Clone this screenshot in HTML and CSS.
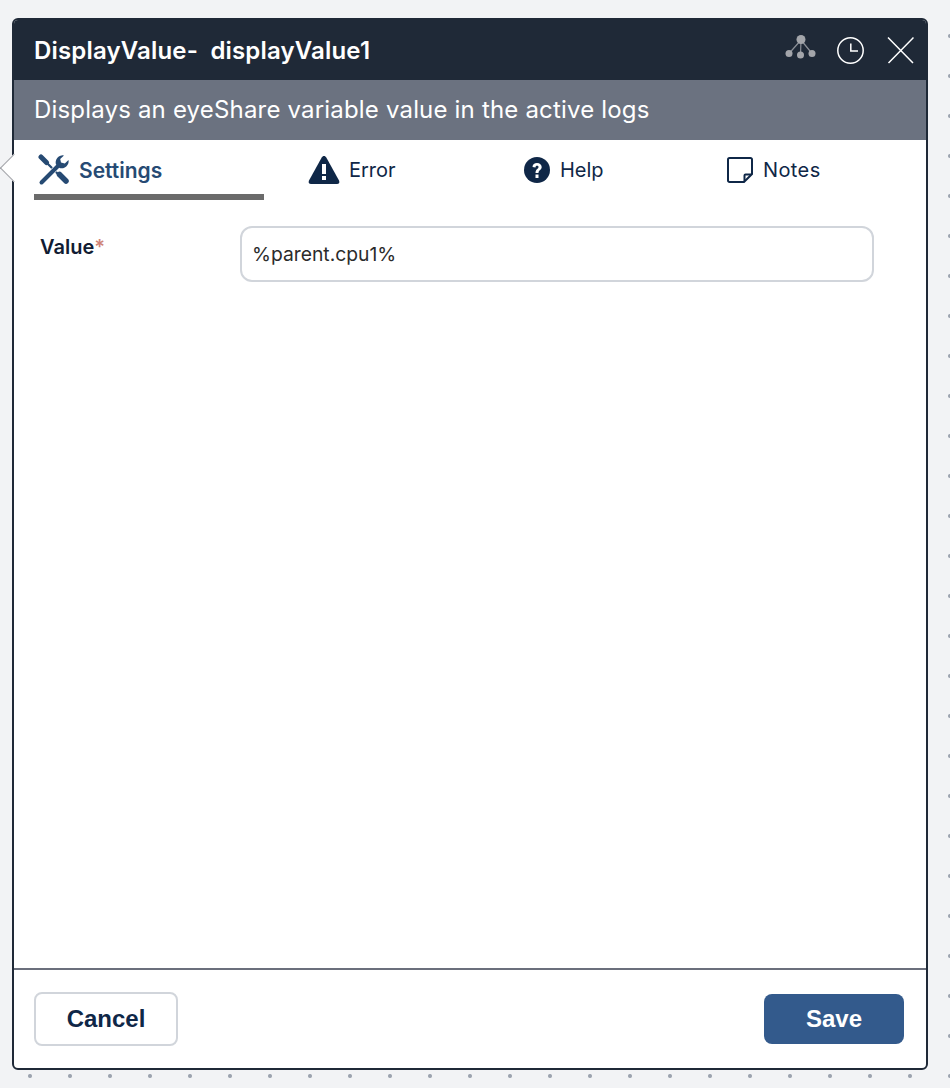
FILE: index.html
```html
<!DOCTYPE html>
<html lang="en">
<head>
    <meta charset="UTF-8">
    <title>DisplayValue</title>
    <link rel="stylesheet" href="styles.css">
</head>
<body>
    <div class="dialog">
        <span class="dialog-arrow"></span>

        <div class="dialog-header">
            <h2>DisplayValue-&nbsp; displayValue1</h2>
            <div class="header-icons">
                <svg class="icon-tree" width="32" height="28" viewBox="0 0 32 28">
                    <path d="M17 5 L5 18.500 M17 5 L16.500 20 M17 5 L28 18.500" stroke="#8b8f97" stroke-width="1.200" fill="none"/>
                    <circle cx="17" cy="4.500" r="4.500" fill="#a3a5aa"/>
                    <circle cx="5" cy="18.500" r="3.500" fill="#a3a5aa"/>
                    <circle cx="16.500" cy="20" r="3.500" fill="#a3a5aa"/>
                    <circle cx="28" cy="18.500" r="3.500" fill="#a3a5aa"/>
                </svg>
                <svg class="icon-clock" width="27" height="27" viewBox="0 0 27 27">
                    <circle cx="13.500" cy="13.500" r="12.700" stroke="#fff" stroke-width="1.500" fill="none"/>
                    <path d="M13.800 6.500 V14 H21" stroke="#fff" stroke-width="1.500" fill="none"/>
                </svg>
                <svg class="icon-close" width="27" height="28" viewBox="0 0 27 28">
                    <path d="M1 1.500 L26 27 M26.500 1.500 L1.500 27" stroke="#fff" stroke-width="1.500" fill="none"/>
                </svg>
            </div>
        </div>
        <div class="dialog-sub">Displays an eyeShare variable value in the active logs</div>

        <div class="tabs">
            <div class="tab tab-active">
                <svg width="32" height="32" viewBox="0 0 32 32">
                    <path d="M3 3 L8.500 8.500" stroke="#264a73" stroke-width="5" stroke-linecap="round" fill="none"/>
                    <path d="M8 8 L22 22" stroke="#264a73" stroke-width="2.200" fill="none"/>
                    <path d="M21.500 20.500 L28 27" stroke="#264a73" stroke-width="5.500" stroke-linecap="round" fill="none"/>
                    <path d="M4 28 L20 12" stroke="#fff" stroke-width="5.500" fill="none"/>
                    <path d="M3.500 28.500 L19.500 12.500" stroke="#264a73" stroke-width="4" stroke-linecap="round" fill="none"/>
                    <path d="M26 1.500 A7 7 0 0 0 18 10.500 L21.500 14 A7 7 0 0 0 30.500 6 L26.800 9.500 L23 8.500 L22.200 5 Z" fill="#264a73"/>
                </svg>
                <span>Settings</span>
            </div>
            <div class="tab tab-error">
                <svg width="32" height="30" viewBox="0 0 32 30">
                    <path d="M16 1 C17 1 17.800 1.600 18.300 2.500 L31 25.500 C32 27.500 31 29 29 29 H3 C1 29 0 27.500 1 25.500 L13.700 2.500 C14.200 1.600 15 1 16 1 Z" fill="#0f2747"/>
                    <rect x="14" y="9" width="4" height="10" fill="#fff"/>
                    <rect x="14" y="21" width="4" height="4" fill="#fff"/>
                </svg>
                <span>Error</span>
            </div>
            <div class="tab tab-help">
                <svg width="28" height="28" viewBox="0 0 28 28">
                    <circle cx="14" cy="14" r="13" fill="#0f2747"/>
                    <path d="M9.500 11 C9.500 8.500 11.500 7 14 7 C16.800 7 18.700 8.700 18.700 11 C18.700 14 15.500 14 15.500 17 H12.500 C12.500 13 15.500 13 15.500 11 C15.500 10.200 15 9.800 14 9.800 C13 9.800 12.500 10.300 12.500 11.500 Z" fill="#fff"/>
                    <rect x="12.500" y="18.500" width="3" height="3.500" fill="#fff"/>
                </svg>
                <span>Help</span>
            </div>
            <div class="tab tab-notes">
                <svg width="26" height="26" viewBox="0 0 26 26">
                    <path d="M2.500 1 H23.500 A1.500 1.500 0 0 1 25 2.500 V17 L17 25 H2.500 A1.500 1.500 0 0 1 1 23.500 V2.500 A1.500 1.500 0 0 1 2.500 1 Z" stroke="#0f2747" stroke-width="2" fill="none"/>
                    <path d="M17.500 24 V18.500 A1 1 0 0 1 18.500 17.500 H24" stroke="#0f2747" stroke-width="2" fill="none"/>
                </svg>
                <span>Notes</span>
            </div>
        </div>

        <div class="dialog-body">
            <div class="form-row">
                <label for="value">Value<span class="required">*</span></label>
                <input type="text" id="value" value="%parent.cpu1%">
            </div>
        </div>

        <div class="dialog-footer">
            <button class="btn btn-cancel">Cancel</button>
            <button class="btn btn-save">Save</button>
        </div>
    </div>
</body>
</html>
```

FILE: styles.css
```css
body {
    margin: 0;
    height: 1088px;
    overflow: hidden;
    font-family: Inter, "Liberation Sans", sans-serif;
    background-color: #f2f3f5;
    background-image: radial-gradient(circle, #9ca3af 1.500px, transparent 2.500px);
    background-size: 40px 40px;
    background-position: 10px 16px;
}

.dialog {
    position: relative;
    box-sizing: border-box;
    width: 916px;
    height: 1052px;
    margin: 18px 0 0 12px;
    background-color: #fff;
    border: 2px solid #1f2937;
    border-radius: 6px;
    display: flex;
    flex-direction: column;
}

.dialog-arrow {
    position: absolute;
    left: -10px;
    top: 138px;
    width: 20px;
    height: 20px;
    box-sizing: border-box;
    background-color: #fff;
    border-left: 1px solid #a3a5aa;
    border-bottom: 1px solid #a3a5aa;
    transform: rotate(45deg);
}

.dialog-header {
    height: 60px;
    background-color: #1f2937;
    border-radius: 4px 4px 0 0;
    display: flex;
    align-items: center;
    justify-content: space-between;
    padding: 0 12px 0 20px;
}

.dialog-header h2 {
    margin: 0;
    color: #fff;
    font-size: 24px;
    font-weight: 600;
    letter-spacing: 0.17px;
}

.header-icons {
    display: flex;
    align-items: center;
}

.icon-tree {
    margin: 0 21px 2px 0;
}

.icon-clock {
    margin-right: 23px;
}

.dialog-sub {
    height: 60px;
    line-height: 60px;
    padding-left: 20px;
    background-color: #6b7280;
    color: #fff;
    font-size: 24px;
    letter-spacing: 0.18px;
}

.tabs {
    display: flex;
    height: 60px;
    padding-left: 20px;
    color: #0f2747;
    font-size: 20px;
}

.tab {
    box-sizing: border-box;
    height: 60px;
    display: flex;
    align-items: center;
    gap: 10px;
    padding-left: 46px;
}

.tab-active {
    width: 230px;
    padding: 6px 0 0 4px;
    gap: 9px;
    color: #264a73;
    font-size: 21px;
    font-weight: 600;
    border-bottom: 6px solid #6b6b6b;
}

.tab-error {
    width: 213px;
    padding-left: 44px;
    gap: 9px;
}

.tab-help {
    width: 204px;
    gap: 9px;
}

.tab-notes span {
    letter-spacing: 0.4px;
}

.dialog-body {
    flex: 1;
    padding: 26px 52px 0 26px;
}

.form-row {
    display: flex;
    align-items: flex-start;
}

.form-row label {
    width: 200px;
    margin-top: 9px;
    font-size: 20px;
    font-weight: 600;
    color: #111c33;
}

.required {
    color: #cf8478;
}

.form-row input {
    flex: 1;
    box-sizing: border-box;
    height: 56px;
    padding: 0 10px;
    border: 2px solid #d1d5db;
    border-radius: 12px;
    font-family: Inter, "Liberation Sans", sans-serif;
    font-size: 19.300px;
    color: #2b2b2b;
    outline: none;
}

.dialog-footer {
    height: 100px;
    box-sizing: border-box;
    border-top: 2px solid #6b6f7c;
    display: flex;
    align-items: center;
    justify-content: space-between;
    padding: 0 22px 0 20px;
}

.btn {
    font-family: "Liberation Sans", Arial, sans-serif;
    font-size: 24px;
    font-weight: bold;
    border-radius: 8px;
    cursor: pointer;
}

.btn-cancel {
    width: 144px;
    height: 54px;
    background-color: #fff;
    border: 2px solid #d1d5db;
    color: #0f2747;
}

.btn-save {
    width: 140px;
    height: 50px;
    background-color: #335a8c;
    border: none;
    color: #fff;
}
```
